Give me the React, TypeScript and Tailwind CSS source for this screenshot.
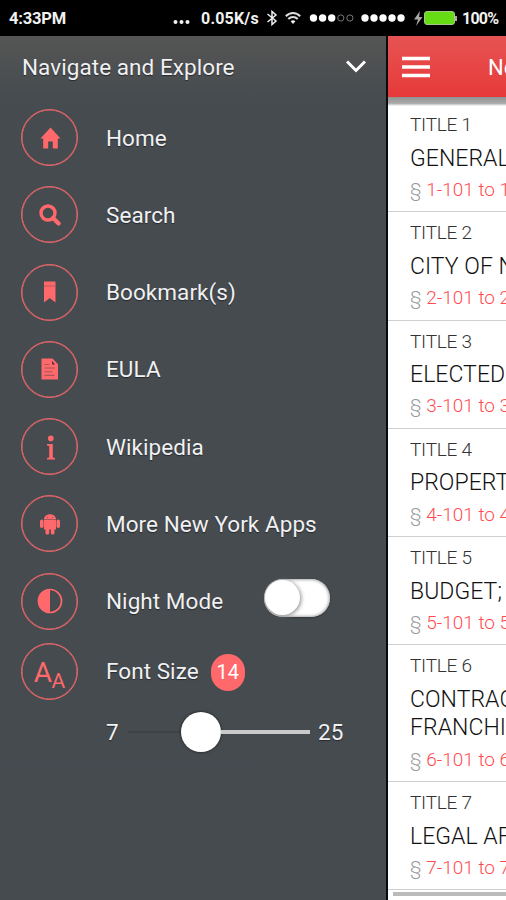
import type { ReactNode } from "react";

const CORAL = "#ff696b";

const HomeIcon = () => (
  <svg width="22" height="22" viewBox="0 0 22 22" fill={CORAL}>
    <path d="M11.500 .5 21.500 11.500h-2.700v10h-5v-7H9.200v7h-5v-10H1.500z" />
  </svg>
);

const SearchIcon = () => (
  <svg width="22" height="22" viewBox="0 0 22 22" fill="none" stroke={CORAL}>
    <circle cx="9" cy="9" r="7" strokeWidth="3.400" />
    <path d="m14 14 5.600 5.600" strokeWidth="4.200" strokeLinecap="round" />
  </svg>
);

const BookmarkIcon = () => (
  <svg width="12" height="22" viewBox="0 0 12 22" fill={CORAL}>
    <path d="M0 .5h11.500v21L5.700 17 0 21.500z" />
    <path d="M0 4.500h11.500v1H0z" fill="#b9575b" />
  </svg>
);

const DocumentIcon = () => (
  <svg width="18" height="22" viewBox="0 0 18 22">
    <path d="M.5.5h11l5.500 5.700v15.300H.5z" fill={CORAL} />
    <path d="M11 2.700v3.800h3z" fill="#54343a" />
    <path d="M3.500 6.500h5M3.500 10h10.500M3.500 13.700h8M3.500 17.400h10" stroke="#a8565b" strokeWidth="1.100" />
  </svg>
);

const InfoIcon = () => (
  <svg width="12" height="26" viewBox="0 0 12 26" fill={CORAL}>
    <circle cx="6.800" cy="4.400" r="2.800" />
    <path d="M3 10h5.800v13.500l2.200.5v1.500H3V24l2.200-.5V12L3 11.500z" />
  </svg>
);

const AndroidIcon = () => (
  <svg width="22" height="22" viewBox="0 0 22 22" fill={CORAL}>
    <path d="M5 6.500C5 3.400 7.600 1.300 11 1.300s6 2.100 6 5.200zM5 7.100h12v9.400H5z" />
    <rect x="1" y="6.500" width="3.500" height="8.500" rx="1.700" />
    <rect x="17.500" y="6.500" width="3.500" height="8.500" rx="1.700" />
    <rect x="6.500" y="15" width="3.700" height="6.500" rx="1.600" />
    <rect x="11.800" y="15" width="3.700" height="6.500" rx="1.600" />
    <circle cx="8.500" cy="4.300" r=".6" fill="#8f5055" />
    <circle cx="13.500" cy="4.300" r=".6" fill="#8f5055" />
  </svg>
);

const ContrastIcon = () => (
  <svg width="26" height="26" viewBox="0 0 26 26">
    <circle cx="13" cy="13" r="11.500" fill="none" stroke={CORAL} strokeWidth="1.700" />
    <path d="M13 1a12 12 0 0 0 0 24z" fill={CORAL} />
  </svg>
);

const FontIcon = () => (
  <span className="flex items-baseline pt-[4px] text-[#ff696b] [text-shadow:none]">
    <span className="text-[28px] leading-none tracking-[-0.500px]">A</span>
    <span className="relative top-[6px] text-[21px] leading-none">A</span>
  </span>
);

const Ring = ({ children }: { children: ReactNode }) => (
  <span className="flex size-[57px] shrink-0 items-center justify-center rounded-full border border-[#ee686b] shadow-[inset_0_0_0_0.5px_#e8666a]">
    {children}
  </span>
);

const items: { label: string; icon: ReactNode }[] = [
  { label: "Home", icon: <HomeIcon /> },
  { label: "Search", icon: <SearchIcon /> },
  { label: "Bookmark(s)", icon: <BookmarkIcon /> },
  { label: "EULA", icon: <DocumentIcon /> },
  { label: "Wikipedia", icon: <InfoIcon /> },
  { label: "More New York Apps", icon: <AndroidIcon /> },
];

const titles = [
  { n: 1, lines: ["GENERAL"] },
  { n: 2, lines: ["CITY OF N"] },
  { n: 3, lines: ["ELECTED"] },
  { n: 4, lines: ["PROPERT"] },
  { n: 5, lines: ["BUDGET;"] },
  { n: 6, lines: ["CONTRAC", "FRANCHI"] },
  { n: 7, lines: ["LEGAL AF"] },
];

const StatusBar = () => (
  <header className="flex h-9 shrink-0 items-center bg-black pl-[9px] font-bold text-[#f2f2f2]">
    <span className="w-[164px] pt-[2px] text-[16.500px] tracking-[-0.200px]">4:33PM</span>
    <svg width="17" height="6" viewBox="0 0 17 6" fill="#f2f2f2" className="mt-2">
      <circle cx="2.500" cy="3" r="2" />
      <circle cx="8.500" cy="3" r="2" />
      <circle cx="14.500" cy="3" r="2" />
    </svg>
    <span className="ml-[11px] w-[65px] pt-[2px] text-[16px] tracking-[0.200px]">0.05K/s</span>
    <svg width="12" height="16" viewBox="0 0 12 16" fill="none" stroke="#eee" strokeWidth="1.500">
      <path d="m1.500 4 8.500 7-4 3.500v-13L10 5l-8.500 7" />
    </svg>
    <svg width="16" height="14" viewBox="0 0 16 14" fill="none" stroke="#ddd" strokeWidth="2" className="ml-[7px]">
      <path d="M.8 5.300C5 1 11 1 15.200 5.300M3.300 8C6 5.200 10 5.200 12.700 8" />
      <path d="M5.600 10.300C7 9 9 9 10.400 10.300L8 13z" fill="#eee" stroke="none" />
    </svg>
    <svg width="100" height="8" viewBox="0 0 100 8" className="ml-[8px]" fill="#fff">
      {[0, 1, 2, 3, 4].map((i) => (
        <circle key={i} cx={4.500 + i * 9.100} cy="4" r={i < 3 ? 3.700 : 3.100} fill={i < 3 ? "#fff" : "none"} stroke={i < 3 ? "none" : "#777"} />
      ))}
      {[0, 1, 2, 3, 4].map((i) => (
        <circle key={i} cx={56 + i * 9} cy="4" r="3.700" />
      ))}
    </svg>
    <svg width="9" height="15" viewBox="0 0 9 15" className="ml-[5px]" fill="#aaa">
      <path d="M6 0 0 8.500h4L2 15l6.500-9H5z" />
    </svg>
    <span className="ml-[1px] h-[14px] w-[31px] rounded-[3px] border border-[#a6c58c] bg-[#66dc14]" />
    <span className="h-[5px] w-[2px] bg-[#aaa]" />
    <span className="ml-[5px] pt-[2px] text-[16px] tracking-[-0.800px]">100%</span>
  </header>
);

const Drawer = () => (
  <aside className="flex w-[388px] shrink-0 flex-col border-r-2 border-[#080a0b] bg-[#454b4f] bg-linear-to-b from-[#555554] to-[#454b4f] to-[66px] text-[22.500px] tracking-[0.060px] text-[#f1f0f2] [text-shadow:0_1px_1px_#25292d]">
    <div className="flex h-[63px] shrink-0 items-center justify-between pr-[20px] pl-[22px]">
      <span>Navigate and Explore</span>
      <svg width="20" height="13" viewBox="0 0 20 13" fill="none" stroke="#fff" strokeWidth="3" className="mb-[2px]">
        <path d="m1 1.500 9 9 9-9" />
      </svg>
    </div>
    {items.map((item) => (
      <div key={item.label} className="flex h-[77.250px] shrink-0 items-center gap-[28px] pl-[21px]">
        <Ring>{item.icon}</Ring>
        <span className="pt-[1.500px]">{item.label}</span>
      </div>
    ))}
    <div className="flex h-[77.250px] shrink-0 items-center pl-[21px]">
      <Ring>
        <ContrastIcon />
      </Ring>
      <span className="ml-[28px] w-[158px] pt-[1.500px]">Night Mode</span>
      <span className="mb-[6px] flex h-[38px] w-[66px] rounded-full bg-white p-[1px] shadow-[inset_0_0_3px_1px_#aaa,0_1px_2px_#34383b]">
        <span className="size-[35px] rounded-full bg-white shadow-[1px_1px_4px_#888]" />
      </span>
    </div>
    <div className="flex h-[63px] shrink-0 items-center pl-[21px]">
      <Ring>
        <FontIcon />
      </Ring>
      <span className="ml-[28px] pt-[2px]">Font Size</span>
      <span className="mt-[2px] ml-[12px] flex h-[37px] w-[34px] items-center justify-center rounded-full bg-[#ff696b] text-[20px] text-white [text-shadow:none]">14</span>
    </div>
    <div className="flex h-[59px] shrink-0 items-center pl-[106px]">
      <span className="w-[22px] pt-[2px]">7</span>
      <span className="h-[2px] w-[53px] bg-[#3d4244]" />
      <span className="size-[40px] rounded-full bg-white shadow-[0_0_2px_1px_#2d3235]" />
      <span className="h-[4px] w-[89px] bg-[#c9cacc]" />
      <span className="ml-[8px] pt-[2px]">25</span>
    </div>
  </aside>
);

const TitleList = () => (
  <main className="flex min-w-0 flex-1 flex-col overflow-hidden bg-white">
    <div className="flex h-[61px] shrink-0 items-center bg-linear-to-b from-[#e65352] to-[#e73839] pl-[14px]">
      <svg width="28" height="24" viewBox="0 0 28 24" fill="none" stroke="#fff" strokeWidth="3.600" className="shrink-0">
        <path d="M0 3.500h28M0 12h28M0 20.500h28" />
      </svg>
      <span className="ml-[58px] pt-[2px] text-[22px] text-white">Ne</span>
    </div>
    <div className="h-[9px] shrink-0 bg-linear-to-b from-[#929292] via-[#aaa] via-70% to-white" />
    <div className="flex shrink-0 flex-col font-light whitespace-nowrap">
      {titles.map(({ n, lines }) => (
        <section key={n} className="border-b border-[#cfcfcf] pl-[22px] first:-mt-[2px]">
          <div className="pt-[8px] text-[19px] leading-[26px] tracking-[-0.250px] text-[#333]">TITLE {n}</div>
          <div className="pt-[6.500px] text-[23px] leading-[28.300px] tracking-[0.050px] text-[#111]">
            {lines.map((line) => (
              <div key={line}>{line}</div>
            ))}
          </div>
          <div className="h-[38.500px] pt-[4px] text-[19px] leading-[25px] text-[#ff4b50]">
            <span className="text-[#999]">§</span> {n}-101 to {n}
          </div>
        </section>
      ))}
    </div>
    <div className="mt-[2px] ml-[5px] h-[4px] shrink-0 bg-[#bbb]" />
  </main>
);

export default function App() {
  return (
    <div className="flex h-[900px] w-[506px] flex-col overflow-hidden bg-black font-['Roboto',sans-serif]">
      <StatusBar />
      <div className="flex min-h-0 flex-1">
        <Drawer />
        <TitleList />
      </div>
    </div>
  );
}
